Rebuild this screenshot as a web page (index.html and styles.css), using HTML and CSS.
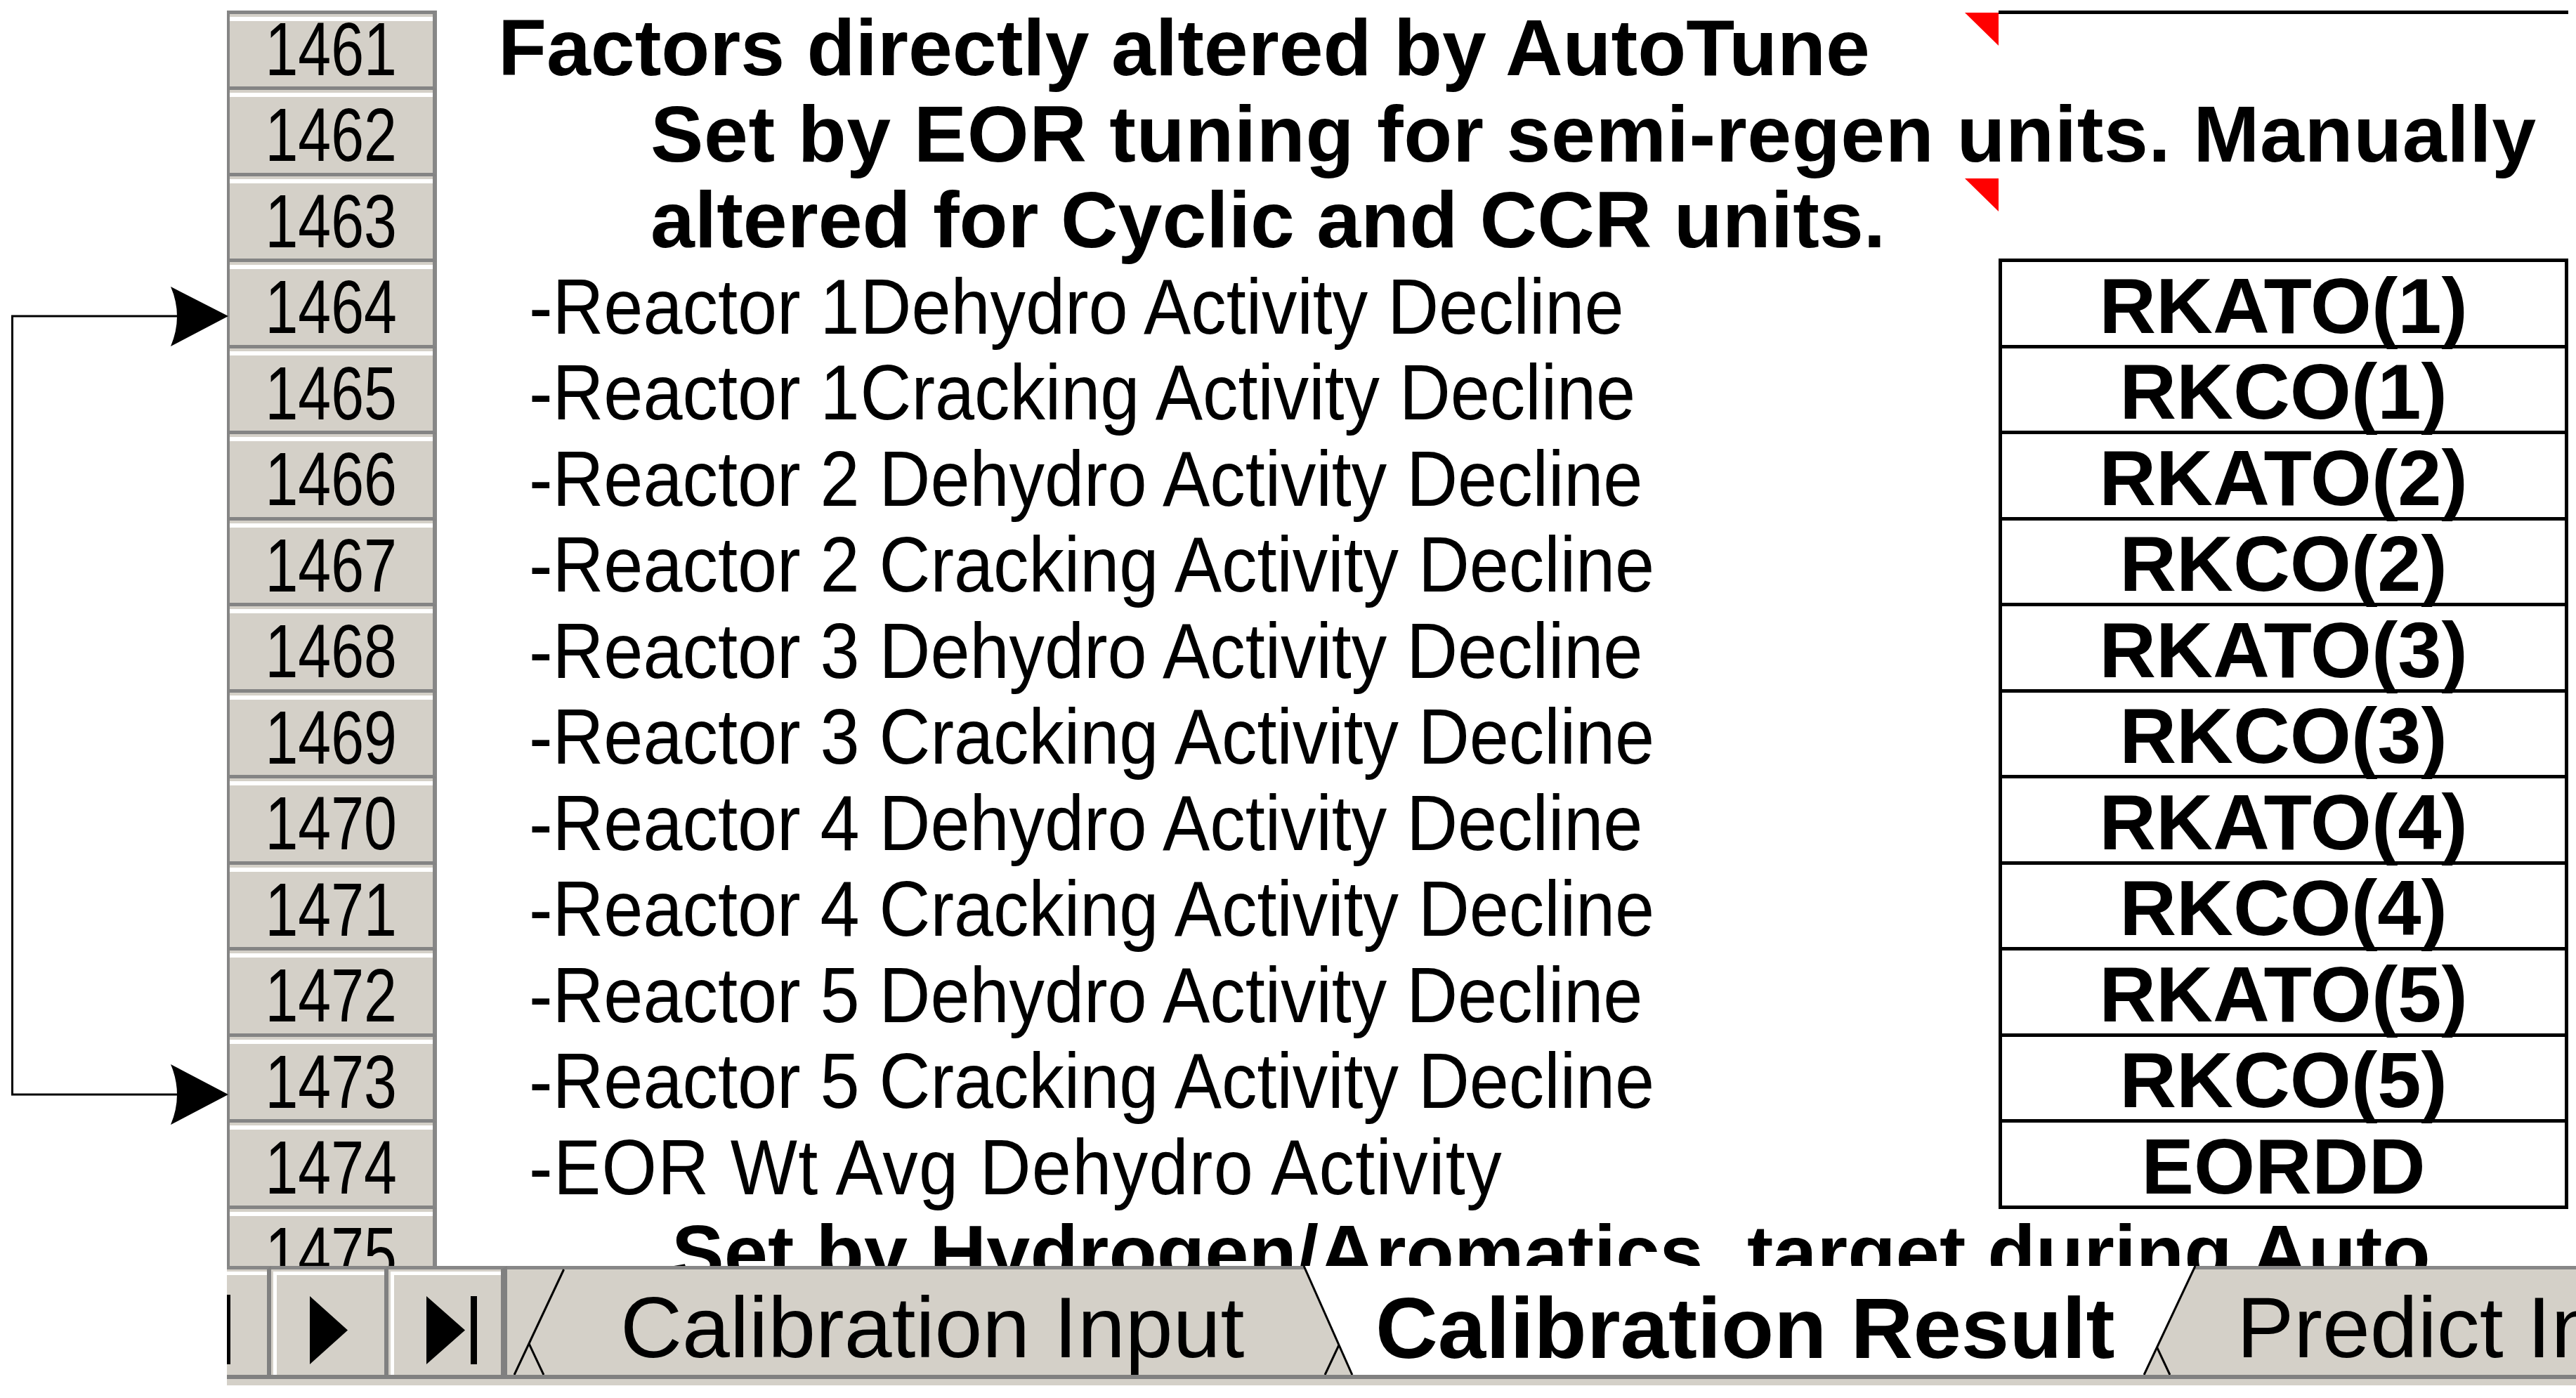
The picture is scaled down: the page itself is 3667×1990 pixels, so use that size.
FILE: index.html
```html
<!DOCTYPE html>
<html lang="en">
<head>
    <meta charset="UTF-8">
    <title>Calibration Result</title>
    <link rel="stylesheet" href="styles.css">
</head>
<body>
    <div class="page">
        <!-- connector drawn on the sheet, from row 1464 to row 1473 -->
        <svg class="connector" width="330" height="1610" viewBox="0 0 330 1610">
            <polyline points="252,450 17.5,450 17.5,1558 252,1558" fill="none" stroke="#000" stroke-width="3"/>
            <path d="M325,450 L243,408 Q261,450 243,493 Z" fill="#000"/>
            <path d="M325,1558 L243,1515 Q261,1558 243,1601 Z" fill="#000"/>
        </svg>

        <div class="sheet">
            <div class="row first">
                <div class="rowhead"><span class="num">1461</span></div>
                <div class="cell pad-title">
                    <span class="title">Factors directly altered by AutoTune</span>
                    <span class="comment-mark"></span>
                </div>
                <div class="boxcol top-rule"></div>
            </div>
            <div class="row">
                <div class="rowhead"><span class="num">1462</span></div>
                <div class="cell pad-note">
                    <span class="title wide-spacing">Set by EOR tuning for semi-regen units. Manually</span>
                </div>
                <div class="boxcol"></div>
            </div>
            <div class="row">
                <div class="rowhead"><span class="num">1463</span></div>
                <div class="cell pad-note">
                    <span class="title">altered for Cyclic and CCR units.</span>
                    <span class="comment-mark"></span>
                </div>
                <div class="boxcol under-rule"></div>
            </div>
            <div class="row">
                <div class="rowhead"><span class="num">1464</span></div>
                <div class="cell pad-item"><span class="item">-Reactor <span class="tight">1 Dehydro</span> Activity Decline</span></div>
                <div class="boxcol box"><span class="code">RKATO(1)</span></div>
            </div>
            <div class="row">
                <div class="rowhead"><span class="num">1465</span></div>
                <div class="cell pad-item"><span class="item">-Reactor <span class="tight">1 Cracking</span> Activity Decline</span></div>
                <div class="boxcol box"><span class="code">RKCO(1)</span></div>
            </div>
            <div class="row">
                <div class="rowhead"><span class="num">1466</span></div>
                <div class="cell pad-item"><span class="item">-Reactor 2 Dehydro Activity Decline</span></div>
                <div class="boxcol box"><span class="code">RKATO(2)</span></div>
            </div>
            <div class="row">
                <div class="rowhead"><span class="num">1467</span></div>
                <div class="cell pad-item"><span class="item">-Reactor 2 Cracking Activity Decline</span></div>
                <div class="boxcol box"><span class="code">RKCO(2)</span></div>
            </div>
            <div class="row">
                <div class="rowhead"><span class="num">1468</span></div>
                <div class="cell pad-item"><span class="item">-Reactor 3 Dehydro Activity Decline</span></div>
                <div class="boxcol box"><span class="code">RKATO(3)</span></div>
            </div>
            <div class="row">
                <div class="rowhead"><span class="num">1469</span></div>
                <div class="cell pad-item"><span class="item">-Reactor 3 Cracking Activity Decline</span></div>
                <div class="boxcol box"><span class="code">RKCO(3)</span></div>
            </div>
            <div class="row">
                <div class="rowhead"><span class="num">1470</span></div>
                <div class="cell pad-item"><span class="item">-Reactor 4 Dehydro Activity Decline</span></div>
                <div class="boxcol box"><span class="code">RKATO(4)</span></div>
            </div>
            <div class="row">
                <div class="rowhead"><span class="num">1471</span></div>
                <div class="cell pad-item"><span class="item">-Reactor 4 Cracking Activity Decline</span></div>
                <div class="boxcol box"><span class="code">RKCO(4)</span></div>
            </div>
            <div class="row">
                <div class="rowhead"><span class="num">1472</span></div>
                <div class="cell pad-item"><span class="item">-Reactor 5 Dehydro Activity Decline</span></div>
                <div class="boxcol box"><span class="code">RKATO(5)</span></div>
            </div>
            <div class="row">
                <div class="rowhead"><span class="num">1473</span></div>
                <div class="cell pad-item"><span class="item">-Reactor 5 Cracking Activity Decline</span></div>
                <div class="boxcol box"><span class="code">RKCO(5)</span></div>
            </div>
            <div class="row">
                <div class="rowhead"><span class="num">1474</span></div>
                <div class="cell pad-item"><span class="item eor">-EOR Wt Avg Dehydro Activity</span></div>
                <div class="boxcol box"><span class="code">EORDD</span></div>
            </div>
            <div class="row">
                <div class="rowhead"><span class="num">1475</span></div>
                <div class="cell wide pad-note2">
                    <span class="title small">Set by Hydrogen/Aromatics&nbsp; target during Auto</span>
                </div>
            </div>
        </div>

        <div class="tabbar">
            <div class="navbtn cut"><span class="cut-glyph"></span></div>
            <div class="navbtn next">
                <svg width="54" height="97" viewBox="0 0 54 97"><polygon points="0,0 54,48.5 0,97" fill="#000"/></svg>
            </div>
            <div class="navbtn last">
                <svg width="72" height="97" viewBox="0 0 72 97"><polygon points="0,0 55,48.5 0,97" fill="#000"/><rect x="63" y="0" width="9" height="97" fill="#000"/></svg>
            </div>
            <div class="tabs">
                <svg class="tab-shapes" width="2945" height="155" viewBox="722 1802 2945 155">
                    <rect x="722" y="1802" width="2945" height="5" fill="#878787"/>
                    <polygon points="3018.4,1807 3700,1807 3700,1957 3088.9,1957" fill="#d4d0c8"/>
                    <line x1="3018.4" y1="1807" x2="3088.9" y2="1957" stroke="#000" stroke-width="3"/>
                    <polygon points="703.4,1807 1956.6,1807 1886.1,1957 773.9,1957" fill="#d4d0c8"/>
                    <line x1="703.4" y1="1807" x2="773.9" y2="1957" stroke="#000" stroke-width="3"/>
                    <line x1="1956.6" y1="1807" x2="1886.1" y2="1957" stroke="#000" stroke-width="3"/>
                    <polygon points="600,1807 802.6,1807 732.1,1957 600,1957" fill="#d4d0c8"/>
                    <line x1="802.6" y1="1807" x2="732.1" y2="1957" stroke="#000" stroke-width="3"/>
                    <polygon points="1856,1802 3125,1802 3052.1,1957 1924.9,1957" fill="#fff"/>
                    <line x1="1856" y1="1802" x2="1924.9" y2="1957" stroke="#000" stroke-width="3"/>
                    <line x1="3125" y1="1802" x2="3052.1" y2="1957" stroke="#000" stroke-width="3"/>
                </svg>
                <span class="tab tab-input">Calibration Input</span>
                <span class="tab tab-result active">Calibration Result</span>
                <span class="tab tab-predict">Predict Input</span>
            </div>
        </div>
    </div>
</body>
</html>
```

FILE: styles.css
```css
body { margin: 0; background: #fff; color: #000; font-family: "Liberation Sans", Arial, sans-serif; }
.page { position: relative; }
.connector { position: absolute; left: 0; top: 0; z-index: 2; }

/* sheet grid */
.sheet { margin-left: 323px; padding-top: 15px; height: 1787px; overflow: hidden; }
.row { display: flex; height: 122.5px; }
.row.first { height: 113px; }
.rowhead { flex: none; width: 299px; box-sizing: border-box; display: flex; align-items: flex-end; justify-content: center; padding-bottom: 5px;
    border-left: 4px solid #858585; border-right: 6px solid #878787; border-bottom: 5px solid #848484;
    background: linear-gradient(#d4d0c8 0, #d4d0c8 4px, #fff 4px, #fff 10px, #d4d0c8 10px); }
.row.first .rowhead { border-top: 5px solid #848484; }
.num { display: inline-block; font-size: 108px; line-height: 0.9; transform: scaleX(0.78); }

.cell { flex: none; width: 2223px; box-sizing: border-box; display: flex; align-items: flex-end; padding-bottom: 8px; position: relative; white-space: nowrap; }
.cell.wide { width: 3034px; }
.pad-title { padding-left: 87px; }
.pad-note { padding-left: 304px; }
.pad-note2 { padding-left: 334px; }
.pad-item { padding-left: 131px; }

.title { font-weight: bold; font-size: 113px; line-height: 0.9; }
.title.small { font-size: 112px; }
.wide-spacing { letter-spacing: 0.6px; }
.item { display: inline-block; font-size: 112px; line-height: 0.9; transform: scaleX(0.9); transform-origin: 0 50%; }
.item.eor { letter-spacing: 1.5px; }
.tight { word-spacing: -30px; }
.comment-mark { position: absolute; right: 0; top: 3px; width: 0; height: 0; border-top: 47px solid #f00; border-left: 48px solid transparent; }

.boxcol { flex: none; width: 811px; box-sizing: border-box; }
.top-rule { border-top: 5px solid #000; }
.under-rule { border-bottom: 5px solid #000; }
.box { display: flex; justify-content: center; align-items: flex-end; padding-bottom: 4px; border-left: 5px solid #000; border-right: 5px solid #000; border-bottom: 5px solid #000; }
.code { font-weight: bold; font-size: 112px; line-height: 0.9; }

/* sheet tabs */
.tabbar { margin-left: 323px; height: 170px; box-sizing: border-box; padding-bottom: 9px; display: flex; background: #d4d0c8; }
.navbtn { flex: none; box-sizing: border-box; display: flex; align-items: flex-start; border-top: 5px solid #878787; border-right: 6px solid #808080; border-bottom: 6px solid #808080;
    box-shadow: inset 3px 3px 0 #d4d0c8, inset 8px 8px 0 #fff; }
.navbtn svg { display: block; margin-top: 38px; }
.navbtn.cut { width: 63px; box-shadow: inset 0 3px 0 #d4d0c8, inset 0 8px 0 #fff; }
.cut-glyph { display: block; width: 5px; height: 99px; margin-top: 36px; background: #000; }
.navbtn.next { width: 167px; }
.navbtn.next svg { margin-left: 55px; }
.navbtn.last { width: 169px; border-right-width: 9px; }
.navbtn.last svg { margin-left: 54px; }

.tabs { flex: 1; position: relative; overflow: hidden; display: flex; align-items: flex-start; border-bottom: 6px solid #808080; }
.tab-shapes { position: absolute; left: 0; top: 0; }
.tab { position: relative; z-index: 1; flex: none; box-sizing: border-box; padding-top: 34px; font-size: 122px; line-height: 0.9; white-space: nowrap; }
.tab-input { margin-left: 161px; width: 1075px; }
.tab-result { width: 1226px; font-size: 123px; }
.tab.active { font-weight: bold; }
```
